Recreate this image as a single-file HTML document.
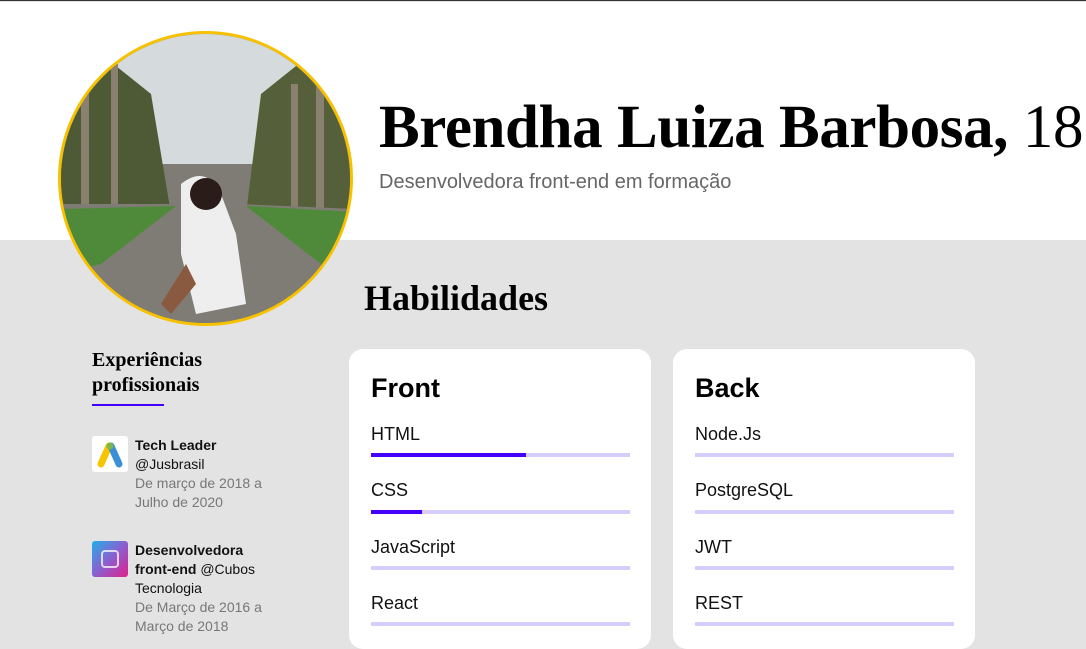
<!DOCTYPE html>
<html><head><meta charset="utf-8"><style>
*{margin:0;padding:0;box-sizing:border-box}
body{width:1086px;height:624px;overflow:hidden;background:#e3e3e3;font-family:"Liberation Sans",sans-serif;position:relative;border-top:1px solid #333}
.top{position:absolute;left:0;top:1px;width:1086px;height:238px;background:#fff}
.photo{position:absolute;left:58px;top:30px;width:295px;height:295px;border-radius:50%;border:3px solid #f7c100;overflow:hidden;
background:#7e7c74}
.name{position:absolute;left:379px;top:92px;font-family:"Liberation Serif",serif;font-weight:bold;font-size:61px;color:#000;white-space:nowrap;letter-spacing:-0.4px}
.name span{font-weight:normal}
.sub{position:absolute;left:379px;top:170px;font-size:20px;color:#666}
.hab{position:absolute;left:364px;top:276px;font-family:"Liberation Serif",serif;font-weight:bold;font-size:36px}
.exp{position:absolute;left:92px;top:347px;font-family:"Liberation Serif",serif;font-weight:bold;font-size:20px;line-height:25px}
.ul{position:absolute;left:92px;top:403px;width:72px;height:2px;background:#4400ff}
.job{position:absolute;left:135px;font-size:14px;line-height:19px;color:#111;width:140px}
.job b{font-weight:bold}
.job .g{color:#777}
.ic{position:absolute;left:92px;width:36px;height:36px;border-radius:3px}
.card{position:absolute;top:348px;width:302px;height:300px;background:#fff;border-radius:14px}
.card h2{position:absolute;left:22px;top:24px;font-size:27px;font-weight:bold}
.it{position:absolute;left:22px;font-size:18px;color:#111}
.bar{position:absolute;left:22px;width:259px;height:4px;background:#d6cdfc}
.bar i{display:block;height:4px;background:#4400ff}
</style></head><body>
<div class="top"></div>
<div class="photo">
<svg width="295" height="295" viewBox="0 0 295 295">
<rect x="0" y="0" width="295" height="130" fill="#d5dbdd"/>
<path d="M0 40 L40 20 L90 60 L110 180 L0 190Z" fill="#4d5a35"/>
<path d="M295 40 L250 20 L200 60 L185 180 L295 190Z" fill="#55603a"/>
<rect x="20" y="40" width="8" height="150" fill="#8a8070"/><rect x="50" y="30" width="7" height="160" fill="#8a8070"/>
<rect x="255" y="40" width="8" height="150" fill="#8a8070"/><rect x="230" y="50" width="7" height="140" fill="#8a8070"/>
<path d="M0 170 L120 170 L175 170 L295 175 L295 295 L0 295Z" fill="#7e7c74"/>
<path d="M0 175 L115 172 L40 230 L0 240Z" fill="#4f8a3a"/>
<path d="M295 178 L185 172 L260 230 L295 240Z" fill="#4f8a3a"/>
<path d="M120 150 Q145 130 160 160 L175 200 L185 270 L135 280 L120 220Z" fill="#eeeeee"/>
<circle cx="145" cy="160" r="16" fill="#2a1c18"/>
<path d="M125 230 L100 270 L110 280 L135 250Z" fill="#8a5a40"/>
</svg></div>
<div class="name">Brendha Luiza Barbosa, <span>18</span></div>
<div class="sub">Desenvolvedora front-end em formação</div>
<div class="hab">Habilidades</div>
<div class="exp">Experiências<br>profissionais</div>
<div class="ul"></div>
<div class="ic" style="top:435px;background:#fff"><svg width="36" height="36"><path d="M9 28 L17 10" stroke="#f7c500" stroke-width="7" stroke-linecap="round"/><path d="M19 10 L27 28" stroke="#3b8fd6" stroke-width="7" stroke-linecap="round"/><circle cx="18" cy="10" r="3.5" fill="#7ab648"/></svg></div>
<div class="job" style="top:435px"><b>Tech Leader</b><br>@Jusbrasil<br><span class="g">De março de 2018 a Julho de 2020</span></div>
<div class="ic" style="top:540px;background:linear-gradient(135deg,#22aee8,#8a5fd0 50%,#e0208a)"><div style="position:absolute;left:9px;top:9px;width:18px;height:18px;border:2px solid rgba(255,255,255,.75);border-radius:4px"></div></div>
<div class="job" style="top:540px"><b>Desenvolvedora<br>front-end</b> @Cubos Tecnologia<br><span class="g">De Março de 2016 a Março de 2018</span></div>
<div class="card" style="left:349px"><h2>Front</h2>
<div class="it" style="top:75px">HTML</div><div class="bar" style="top:104px"><i style="width:155px"></i></div>
<div class="it" style="top:131px">CSS</div><div class="bar" style="top:161px"><i style="width:51px"></i></div>
<div class="it" style="top:188px">JavaScript</div><div class="bar" style="top:217px"></div>
<div class="it" style="top:244px">React</div><div class="bar" style="top:273px"></div></div>
<div class="card" style="left:673px"><h2>Back</h2>
<div class="it" style="top:75px">Node.Js</div><div class="bar" style="top:104px"></div>
<div class="it" style="top:131px">PostgreSQL</div><div class="bar" style="top:161px"></div>
<div class="it" style="top:188px">JWT</div><div class="bar" style="top:217px"></div>
<div class="it" style="top:244px">REST</div><div class="bar" style="top:273px"></div></div>
</body></html>
